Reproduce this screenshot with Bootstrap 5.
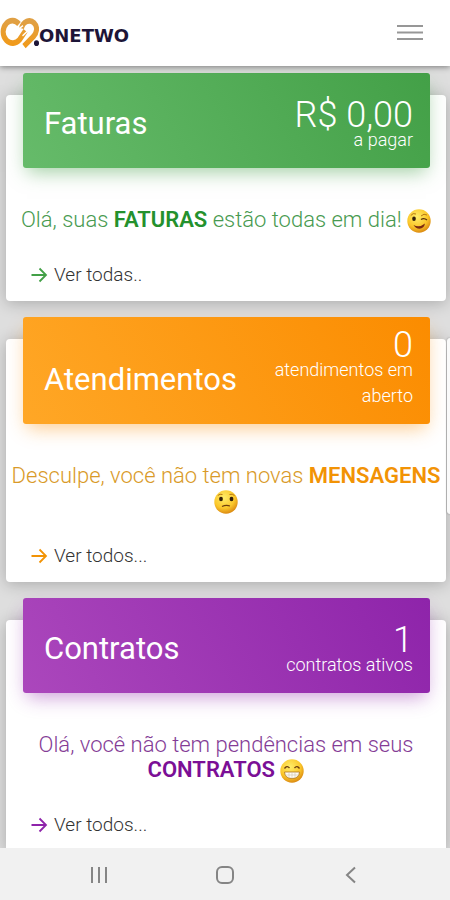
<!DOCTYPE html>
<html lang="pt-BR">
<head>
<meta charset="utf-8">
<meta name="viewport" content="width=device-width, initial-scale=1">
<title>OneTwo</title>
<link href="https://cdn.jsdelivr.net/npm/bootstrap@5.3.0/dist/css/bootstrap.min.css" rel="stylesheet">
<style>
body { font-family: Roboto, "Open Sans", sans-serif; font-weight: 300; background: #dedede; color: #3c3c3c; }
.app-bar { height: 66px; box-shadow: 0 1px 6px rgba(0,0,0,.45); z-index: 5; }
.brand-word { font: 700 18px/24px "DejaVu Sans", sans-serif; color: #1d1538; margin-top: 6px; }
.menu-btn { width: 40px; height: 40px; margin: 0 20px 2px 0; }
.content { min-height: 0; padding: 29px 4px 0 6px; overflow-y: auto; scrollbar-width: none; }
.content::-webkit-scrollbar { display: none; }
.panel { border: 0; border-radius: 4px; margin-bottom: 38px; box-shadow: 0 2px 16px rgba(0,0,0,.24); }
.panel-top { margin: -22px 16px 0 17px; min-height: 95px; padding: 16px 17px 15px 21px; border-radius: 3px; color: #fff; }
.panel-title { font-size: 31px; line-height: 36px; font-weight: 400; margin-bottom: 11px; }
.figure-side { flex: 0 0 40%; }
.amount { font-size: 36px; line-height: 24px; white-space: nowrap; }
.caption-line { font-size: 18px; line-height: 26px; }
.message { font-size: 22px; line-height: 25px; margin: 39px 4px 30px; }
.message strong { font-weight: 600; }
.emoji { width: 24px; height: 24px; margin: -2px 0 -1px; vertical-align: -5px; }
.more { font-size: 19px; line-height: 26px; margin: 0 25px 13px; color: #333; gap: 6px; }
.tone-green .panel-top { background: linear-gradient(60deg, #66bb6a, #43a047); box-shadow: 0 8px 18px -4px rgba(67,160,71,.5); }
.tone-green .message { color: #489a50; }
.tone-green strong { color: #24912d; }
.tone-green .more svg { color: #43a047; }
.tone-orange .panel-top { background: linear-gradient(60deg, #ffa726, #fb8c00); box-shadow: 0 8px 18px -4px rgba(251,140,0,.45); }
.tone-orange .message { color: #d99a28; }
.tone-orange strong { color: #f29305; }
.tone-orange .more svg { color: #f29305; }
.tone-purple .panel-top { background: linear-gradient(60deg, #ab47bc, #8e24aa); box-shadow: 0 8px 18px -4px rgba(142,36,170,.45); }
.tone-purple .message { color: #843c96; }
.tone-purple strong { color: #7b0f96; }
.tone-purple .more svg { color: #8e24aa; }
.edge-handle { position: absolute; top: 338px; right: 0; width: 3px; height: 176px; background: #fafafa; border-radius: 4px 0 0 4px; box-shadow: 0 0 2px rgba(0,0,0,.4); }
.system-bar { height: 52px; padding: 0 75px; background: #f1f1f1; z-index: 5; }
.system-bar .btn { width: 48px; height: 48px; }
</style>
<script src="https://cdn.jsdelivr.net/npm/bootstrap@5.3.0/dist/js/bootstrap.bundle.min.js"></script>
</head>
<body class="d-flex flex-column vh-100 overflow-hidden">
<svg width="0" height="0" class="position-absolute" aria-hidden="true">
  <defs>
    <radialGradient id="face" cx=".42" cy=".32" r=".68"><stop offset="0" stop-color="#ffed69"/><stop offset=".65" stop-color="#fbc72b"/><stop offset="1" stop-color="#dc8c13"/></radialGradient>
    <linearGradient id="gold" x1="0" y1="0" x2="0" y2="1"><stop offset="0" stop-color="#e0a044"/><stop offset="1" stop-color="#f09a1b"/></linearGradient>
    <symbol id="arrow" viewBox="0 0 16 16"><path d="M0 8h14M8 1.500l6.500 6.500L8 14.500" fill="none" stroke="currentColor" stroke-width="1.800"/></symbol>
  </defs>
</svg>

<header class="app-bar navbar p-0 bg-white position-relative flex-shrink-0 flex-nowrap justify-content-between">
  <a href="#" class="d-flex align-items-center text-decoration-none" aria-label="OneTwo">
    <svg width="39" height="34" viewBox="0 0 39 30" preserveAspectRatio="none" aria-hidden="true">
      <g fill="none" stroke="url(#gold)" stroke-width="5">
        <path d="M19 7C15.500 3.500 10 3 6.500 6.500c-4.500 4-4.500 11 0 15 4 3.500 9.500 3 13-.5l6-8"/>
        <path d="M21.500 11c1.500-6.500 8.500-8.500 12.500-5s3 8.500-.5 12L24 26.500"/>
      </g>
      <path d="M17 12.500l6-4M22.500 17.500l6-5" stroke="#fff" stroke-width="1.300"/>
      <circle cx="36.500" cy="24" r="2.500" fill="#1d1538"/>
    </svg>
    <span class="brand-word">ONETWO</span>
  </a>
  <button type="button" class="menu-btn btn p-0 border-0 d-flex align-items-center justify-content-center" aria-label="Menu">
    <svg width="26" height="18" viewBox="0 0 26 18"><path d="M0 3h26M0 9.500h26M0 16h26" stroke="#979797" stroke-width="2"/></svg>
  </button>
</header>

<main class="content flex-fill">
  <section class="panel card tone-green">
    <div class="panel-top d-flex align-items-end justify-content-between">
      <h2 class="panel-title">Faturas</h2>
      <div class="figure-side text-end d-flex flex-column align-items-end"><div class="amount">R$ 0,00</div><div class="caption-line">a pagar</div></div>
    </div>
    <p class="message text-center">Olá, suas <strong>FATURAS</strong> estão todas em dia!
      <svg class="emoji" viewBox="0 0 24 24" role="img" aria-label="Piscando"><circle cx="12" cy="12" r="11.700" fill="url(#face)"/><ellipse cx="7" cy="9.800" rx="1.800" ry="2.200" fill="#35200b"/><path d="M3.800 6.500Q6 3.500 9 5M14 7q3-3 6-1" fill="none" stroke="#b77813" stroke-width="1"/><path d="M14 10.500q3-2 6 .5" fill="none" stroke="#5b320d" stroke-width="1.400"/><path d="M6.500 16q6 3 11.500-1.500-1 5-5.500 5.200-4 0-6-3.700z" fill="#7d2a12"/></svg></p>
    <a href="#" class="more d-flex align-items-center text-decoration-none"><svg width="17" height="16" aria-hidden="true"><use href="#arrow"/></svg>Ver todas..</a>
  </section>

  <section class="panel card tone-orange">
    <div class="panel-top d-flex align-items-end justify-content-between">
      <h2 class="panel-title">Atendimentos</h2>
      <div class="figure-side text-end"><div class="amount">0</div><div class="caption-line">atendimentos em aberto</div></div>
    </div>
    <p class="message text-center">Desculpe, você não tem novas <strong>MENSAGENS</strong>
      <svg class="emoji" viewBox="0 0 24 24" role="img" aria-label="Confuso"><circle cx="12" cy="12" r="11.700" fill="url(#face)"/><ellipse cx="7" cy="9" rx="1.900" ry="2.200" fill="#35200b"/><ellipse cx="17.500" cy="9" rx="1.900" ry="2.200" fill="#35200b"/><path d="M3.800 5.500Q6 3.500 8.500 4.500M15.500 4.500q3-1 5 1" fill="none" stroke="#b77813" stroke-width="1"/><path d="M8 16.500q4-2 8-.5" fill="none" stroke="#70400f" stroke-width="1.200"/></svg></p>
    <a href="#" class="more d-flex align-items-center text-decoration-none"><svg width="17" height="16" aria-hidden="true"><use href="#arrow"/></svg>Ver todos...</a>
  </section>

  <section class="panel card tone-purple">
    <div class="panel-top d-flex align-items-end justify-content-between">
      <h2 class="panel-title">Contratos</h2>
      <div class="figure-side text-end"><div class="amount">1</div><div class="caption-line">contratos ativos</div></div>
    </div>
    <p class="message text-center">Olá, você não tem pendências em seus <strong>CONTRATOS</strong>
      <svg class="emoji" viewBox="0 0 24 24" role="img" aria-label="Sorrindo"><circle cx="12" cy="12" r="11.700" fill="url(#face)"/><path d="M4.500 9.500q2.500-3.500 5-.5M14.500 9q2.500-3 5 .5" fill="none" stroke="#6b3c0e" stroke-width="1.300"/><path d="M4.500 13h15q-.5 6.500-7.500 6.500T4.500 13z" fill="#fffdf5" stroke="#ad741d" stroke-width=".8"/><path d="M5.500 16h13M9 13v6M12 13v6.500M15 13v6" stroke="#ccc4ac" stroke-width=".6"/></svg></p>
    <a href="#" class="more d-flex align-items-center text-decoration-none"><svg width="17" height="16" aria-hidden="true"><use href="#arrow"/></svg>Ver todos...</a>
  </section>
</main>

<div class="edge-handle" aria-hidden="true"></div>

<nav class="system-bar d-flex flex-shrink-0 align-items-center justify-content-between" aria-label="Sistema">
  <button type="button" class="btn border-0 p-0" aria-label="Recentes"><svg width="18" height="18" viewBox="0 0 18 18"><path d="M2 1v16M9 1v16M16 1v16" stroke="#858585" stroke-width="2"/></svg></button>
  <button type="button" class="btn border-0 p-0" aria-label="Início"><svg width="20" height="20" viewBox="0 0 20 20"><rect x="2" y="2" width="16" height="16" rx="5" fill="none" stroke="#858585" stroke-width="2"/></svg></button>
  <button type="button" class="btn border-0 p-0" aria-label="Voltar"><svg width="18" height="18" viewBox="0 0 18 18"><path d="M13 1.500L5 9l8 7.500" fill="none" stroke="#858585" stroke-width="2"/></svg></button>
</nav>
</body>
</html>
